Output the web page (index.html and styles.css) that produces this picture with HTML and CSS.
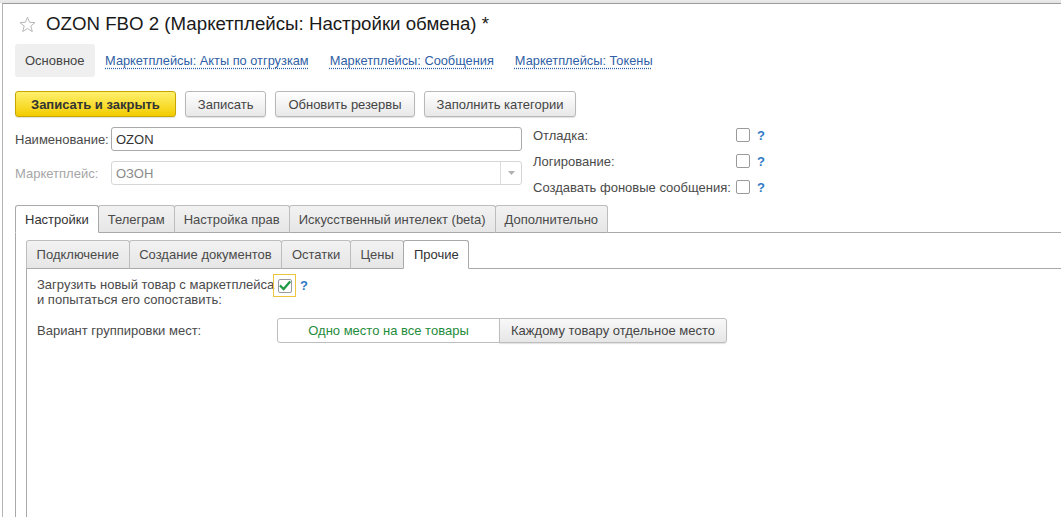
FILE: index.html
```html
<!DOCTYPE html>
<html lang="ru">
<head>
<meta charset="utf-8">
<title>OZON FBO 2</title>
<link rel="stylesheet" href="styles.css">
</head>
<body>
<div class="window">
  <div class="title-row">
    <svg class="star" width="17" height="17" viewBox="0 0 17 17"><path d="M8.5 1.2 L10.6 6.3 L16 6.6 L11.8 10 L13.3 15.6 L8.5 12.5 L3.7 15.6 L5.2 10 L1 6.6 L6.4 6.3 Z" fill="none" stroke="#b8b8b8" stroke-width="1"/></svg>
    <h1 class="title">OZON FBO 2 (Маркетплейсы: Настройки обмена) *</h1>
  </div>
  <nav class="nav">
    <span class="nav-item nav-current">Основное</span>
    <a class="nav-item nav-link">Маркетплейсы: Акты по отгрузкам</a>
    <a class="nav-item nav-link">Маркетплейсы: Сообщения</a>
    <a class="nav-item nav-link">Маркетплейсы: Токены</a>
  </nav>
  <div class="toolbar">
    <button class="btn btn-primary">Записать и закрыть</button>
    <button class="btn">Записать</button>
    <button class="btn">Обновить резервы</button>
    <button class="btn">Заполнить категории</button>
  </div>
  <div class="form">
    <div class="form-left">
      <div class="field-row">
        <label class="field-label">Наименование:</label>
        <div class="input"><span>OZON</span></div>
      </div>
      <div class="field-row">
        <label class="field-label disabled">Маркетплейс:</label>
        <div class="input input-disabled"><span>ОЗОН</span><span class="dd"><svg width="7" height="4" viewBox="0 0 7 4"><path d="M0 0 H7 L3.5 4 Z" fill="#b0b0b0"/></svg></span></div>
      </div>
    </div>
    <div class="form-right">
      <div class="check-row"><span class="check-label">Отладка:</span><span class="checkbox"></span><span class="help">?</span></div>
      <div class="check-row"><span class="check-label">Логирование:</span><span class="checkbox"></span><span class="help">?</span></div>
      <div class="check-row"><span class="check-label">Создавать фоновые сообщения:</span><span class="checkbox"></span><span class="help">?</span></div>
    </div>
  </div>
  <div class="tabset outer">
    <div class="tabs">
      <span class="tab active">Настройки</span>
      <span class="tab">Телеграм</span>
      <span class="tab">Настройка прав</span>
      <span class="tab">Искусственный интелект (beta)</span>
      <span class="tab">Дополнительно</span>
    </div>
    <div class="panel outer-panel">
      <div class="tabset inner">
        <div class="tabs">
          <span class="tab">Подключение</span>
          <span class="tab">Создание документов</span>
          <span class="tab">Остатки</span>
          <span class="tab">Цены</span>
          <span class="tab active">Прочие</span>
        </div>
        <div class="panel inner-panel">
          <div class="opt-row">
            <span class="opt-label">Загрузить новый товар с маркетплейса<br>и попытаться его сопоставить:</span>
            <span class="focus-box"><span class="checkbox checked"><svg width="14" height="12" viewBox="0 0 14 12"><path d="M2 6.2 L5.4 9.6 L12.2 1.6" fill="none" stroke="#1e9a45" stroke-width="2.6" stroke-linecap="square"/></svg></span></span>
            <span class="help">?</span>
          </div>
          <div class="radio-row">
            <span class="radio-label">Вариант группировки мест:</span>
            <div class="seg">
              <span class="seg-item seg-on">Одно место на все товары</span>
              <span class="seg-item seg-off">Каждому товару отдельное место</span>
            </div>
          </div>
        </div>
      </div>
    </div>
  </div>
</div>
</body>
</html>
```

FILE: styles.css
```css
html {
  background: linear-gradient(#ebebeb 0, #e3e3e3 3px, #ffffff 3px);
  height: 100%;
}
body {
  margin: 0;
  height: 100%;
  font-family: "Liberation Sans", Arial, sans-serif;
  font-size: 13px;
  color: #4a4a4a;
  overflow: hidden;
}
.window {
  margin: 3px 0 0 2px;
  border-top: 1px solid #9c9c9c;
  border-left: 1px solid #b3b3b3;
  background: #fff;
  height: calc(100% - 4px);
  box-sizing: border-box;
  padding-left: 12px;
  display: flex;
  flex-direction: column;
}
.title-row {
  display: flex;
  align-items: center;
  height: 24px;
  margin-top: 8px;
  padding-left: 4px;
}
.star { flex: none; }
.title {
  margin: 0 0 0 10px;
  font-size: 18.7px;
  font-weight: normal;
  color: #1a1a1a;
  white-space: nowrap;
}
.nav {
  display: flex;
  align-items: center;
  height: 33px;
  margin-top: 8px;
}
.nav-item {
  height: 33px;
  line-height: 33px;
  padding: 0 10px;
  white-space: nowrap;
}
.nav-current {
  background: #efefef;
  border-radius: 3px;
  color: #444;
}
.nav-link {
  font-size: 12.8px;
  padding: 0 10.5px;
  color: #2f5fa6;
  text-decoration: underline dotted #2f5fa6;
  text-underline-offset: 3px;
}
.toolbar {
  display: flex;
  gap: 9px;
  margin-top: 14px;
}
.btn {
  height: 26px;
  padding: 0 12px;
  border: 1px solid #b8b8b8;
  border-radius: 3px;
  background: linear-gradient(#ffffff, #e8e8e8);
  box-shadow: 0 1px 1px rgba(0, 0, 0, 0.12);
  font-family: inherit;
  font-size: 13px;
  color: #444;
  white-space: nowrap;
}
.btn-primary {
  padding: 0 15px;
  background: linear-gradient(#fff06e, #f3cc00);
  border-color: #c8a600;
  font-weight: bold;
  color: #333;
}
.form {
  display: flex;
  margin-top: 5px;
}
.form-left {
  width: 507px;
  padding-top: 5px;
  display: flex;
  flex-direction: column;
  gap: 10px;
}
.field-row {
  display: flex;
  align-items: center;
  height: 24px;
}
.field-label {
  width: 96px;
  flex: none;
  color: #4a4a4a;
}
.field-label.disabled { color: #a6a6a6; }
.input {
  flex: 1;
  height: 24px;
  box-sizing: border-box;
  border: 1px solid #a9a9a9;
  border-radius: 3px;
  display: flex;
  align-items: center;
  padding-left: 4px;
  color: #333;
}
.input-disabled {
  border-color: #d6d6d6;
  color: #8a8a8a;
}
.input-disabled span:first-child { flex: 1; }
.dd {
  width: 20px;
  height: 22px;
  border-left: 1px solid #dcdcdc;
  display: flex;
  align-items: center;
  justify-content: center;
}
.form-right {
  margin-left: 11px;
  display: flex;
  flex-direction: column;
}
.check-row {
  display: flex;
  align-items: center;
  height: 26px;
}
.check-label {
  width: 203px;
  white-space: nowrap;
  color: #4a4a4a;
}
.checkbox {
  width: 14px;
  height: 14px;
  box-sizing: border-box;
  border: 1px solid #9a9a9a;
  border-radius: 2px;
  background: #fff;
  display: inline-flex;
  align-items: center;
  justify-content: center;
  flex: none;
}
.help {
  margin-left: 7px;
  color: #2f7ac6;
  font-weight: bold;
}
.tabset {
  display: flex;
  flex-direction: column;
  flex: 1;
}
.outer { margin-top: 5px; }
.tabs {
  display: flex;
  border-bottom: 1px solid #a9a9a9;
  height: 27px;
}
.inner .tabs { height: 28px; }
.tab {
  box-sizing: border-box;
  height: calc(100% + 1px);
  padding: 0 9px;
  display: flex;
  align-items: center;
  border: 1px solid #bdbdbd;
  border-bottom-color: #a9a9a9;
  border-radius: 3px 3px 0 0;
  background: linear-gradient(#f2f2f2, #e6e6e6);
  color: #4a4a4a;
  white-space: nowrap;
  margin-left: -1px;
}
.tab:first-child { margin-left: 0; }
.inner .tab { padding: 0 9.6px; }
.tab.active {
  background: #fff;
  border-color: #a9a9a9;
  border-bottom-color: #fff;
  color: #333;
  position: relative;
  z-index: 1;
}
.panel {
  flex: 1;
  border-left: 1px solid #a9a9a9;
  display: flex;
  flex-direction: column;
}
.outer-panel { padding: 7px 0 0 10px; }
.inner-panel { padding: 5px 0 0 10px; }
.opt-row {
  display: flex;
  align-items: flex-start;
}
.opt-label {
  width: 236px;
  line-height: 15px;
  padding-top: 3px;
  white-space: nowrap;
}
.focus-box {
  width: 23px;
  height: 23px;
  box-sizing: border-box;
  border: 1px solid #ecc53c;
  display: flex;
  align-items: center;
  justify-content: center;
}
.opt-row .help { margin-left: 4px; line-height: 23px; }
.radio-row {
  display: flex;
  align-items: center;
  margin-top: 11px;
}
.radio-label { width: 240px; }
.seg {
  display: flex;
  height: 25px;
}
.seg-item {
  box-sizing: border-box;
  height: 25px;
  display: flex;
  align-items: center;
  justify-content: center;
  border: 1px solid #bdbdbd;
  white-space: nowrap;
}
.seg-on {
  width: 223px;
  background: #fff;
  color: #1f8c3c;
  border-radius: 3px 0 0 3px;
}
.seg-off {
  width: 228px;
  margin-left: -1px;
  background: linear-gradient(#f8f8f8, #e6e6e6);
  color: #444;
  border-radius: 0 3px 3px 0;
  box-shadow: 0 1px 1px rgba(0, 0, 0, 0.12);
}
```
